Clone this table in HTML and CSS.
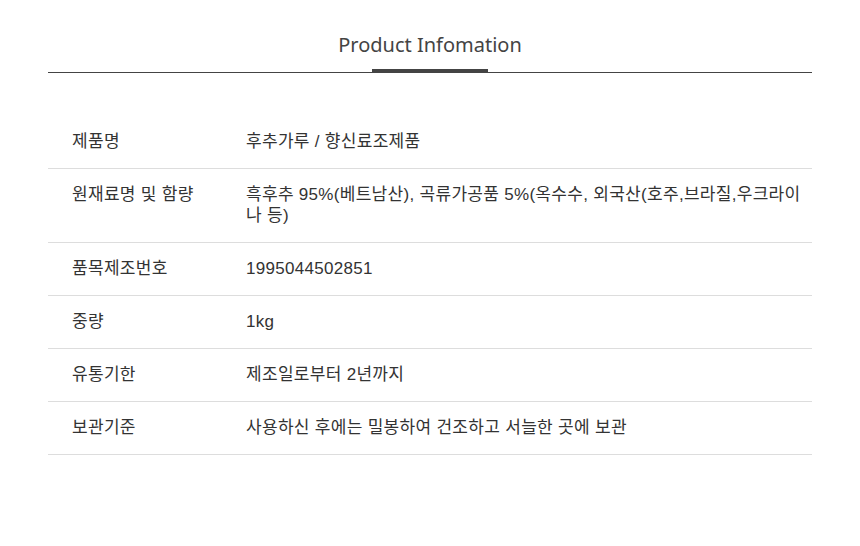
FILE: index.html
```html
<!DOCTYPE html>
<html lang="ko">
<head>
    <meta charset="UTF-8">
    <meta name="viewport" content="width=device-width, initial-scale=1.0">
    <title>Product Infomation</title>
    <link rel="stylesheet" href="styles.css">
</head>
<body>
    <div class="product-info">
        <div class="info-head">
            <h2>Product Infomation</h2>
            <div class="bar"></div>
        </div>

        <table class="info-table">
            <tr>
                <th>제품명</th>
                <td>후추가루 / 향신료조제품</td>
            </tr>
            <tr>
                <th>원재료명 및 함량</th>
                <td>흑후추 95%(베트남산), 곡류가공품 5%(옥수수, 외국산(호주,브라질,우크라이나 등)</td>
            </tr>
            <tr>
                <th>품목제조번호</th>
                <td>1995044502851</td>
            </tr>
            <tr>
                <th>중량</th>
                <td>1kg</td>
            </tr>
            <tr>
                <th>유통기한</th>
                <td>제조일로부터 2년까지</td>
            </tr>
            <tr>
                <th>보관기준</th>
                <td>사용하신 후에는 밀봉하여 건조하고 서늘한 곳에 보관</td>
            </tr>
        </table>
    </div>
</body>
</html>
```

FILE: styles.css
```css
body {
    margin: 0;
    background: #fff;
    color: #333;
    font-family: "Liberation Sans", "Noto Sans CJK KR", sans-serif;
}

.product-info {
    width: 764px;
    margin: 0 auto;
}

.info-head {
    padding-top: 32px;
    border-bottom: 1px solid #444;
    text-align: center;
}

.info-head h2 {
    margin: 0 0 11px;
    font-family: "Noto Sans", sans-serif;
    font-size: 20px;
    font-weight: 400;
    line-height: 26px;
    color: #444;
}

.bar {
    width: 116px;
    height: 3px;
    margin: 0 auto;
    background: #444;
}

.info-table {
    width: 100%;
    margin-top: 43px;
    border-collapse: collapse;
    font-size: 17px;
    line-height: 21px;
    letter-spacing: 0.3px;
}

.info-table tr {
    border-bottom: 1px solid #ddd;
}

.info-table th,
.info-table td {
    padding: 15px 0 16px;
    text-align: left;
    vertical-align: top;
    font-weight: 400;
}

.info-table th {
    width: 174px;
    padding-left: 24px;
}

.info-table td {
    padding-right: 8px;
}
```
